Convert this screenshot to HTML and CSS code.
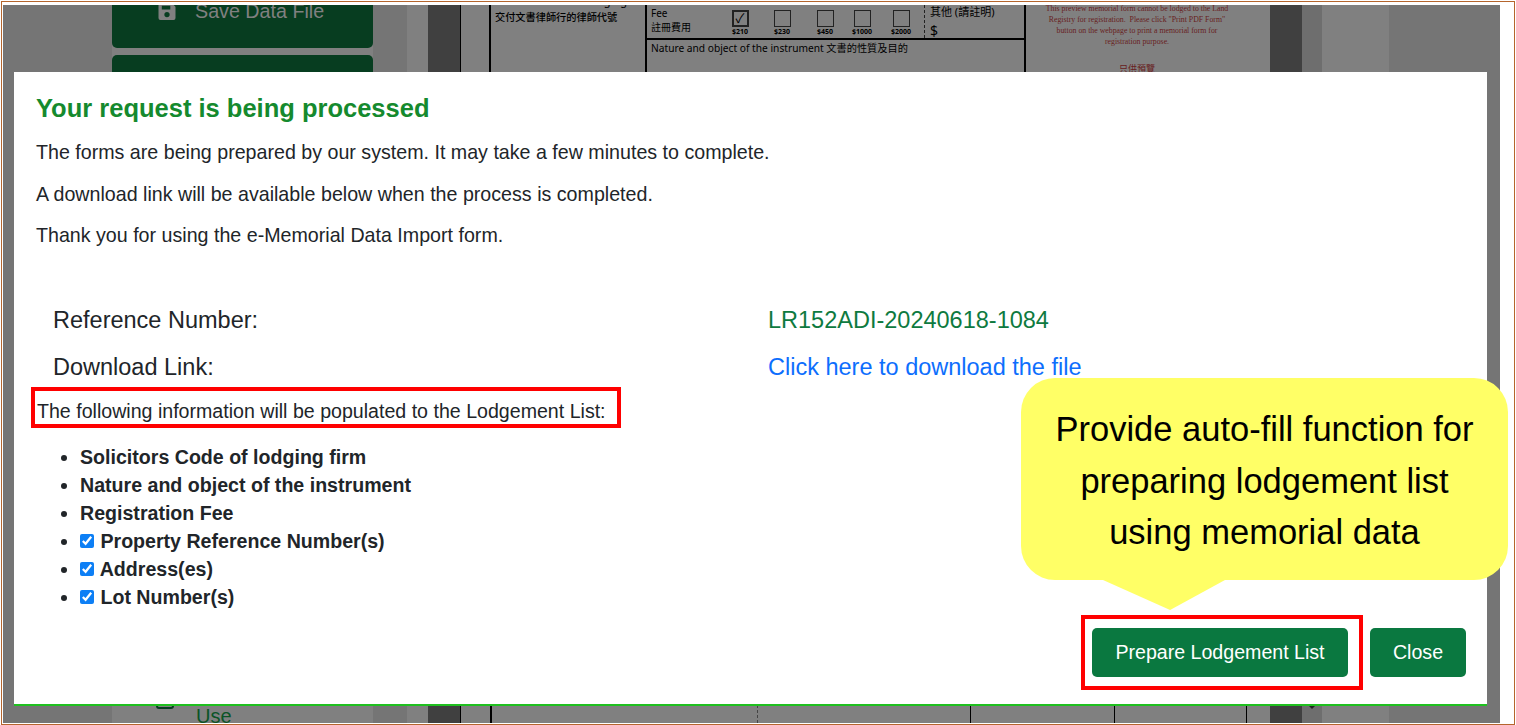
FILE: index.html
```html
<!DOCTYPE html>
<html lang="en">
<head>
<meta charset="utf-8">
<title>e-Memorial Data Import</title>
<link rel="stylesheet" href="styles.css">
</head>
<body>
<div class="frame">
  <div class="page">
    <div class="col col-rail"></div>
    <aside class="col col-side">
      <div class="side-btn side-btn-first">
        <svg class="disk" viewBox="0 0 18 18" aria-hidden="true"><path fill-rule="evenodd" d="M2 0H14L18 4V16A2 2 0 0 1 16 18H2A2 2 0 0 1 0 16V2A2 2 0 0 1 2 0ZM3.5 3V7H12.5V3ZM9 9.5A2.8 2.8 0 1 0 9 15.1A2.8 2.8 0 1 0 9 9.5Z"/></svg>
        <span>Save Data File</span>
      </div>
      <div class="side-btn side-btn-second"></div>
      <div class="use-item">
        <span class="use-box"></span>
        <span class="use-label">Use</span>
      </div>
    </aside>
    <div class="col col-track"></div>
    <div class="col col-gap"></div>
    <div class="col col-dark col-dark-edge"></div>
    <main class="col col-sheet">
      <div class="sheet-top">
        <div class="cell-firm">
          <p class="firm-en">Solicitors Code of lodging firm</p>
          <p class="firm-zh">交付文書律師行的律師代號</p>
        </div>
        <div class="cell-form">
          <div class="fee-row">
            <div class="fee-title">Fee<br>註冊費用</div>
            <div class="fee-opt"><span class="fee-box fee-box-on">✓</span><span class="fee-amt">$210</span></div>
            <div class="fee-opt"><span class="fee-box"></span><span class="fee-amt">$230</span></div>
            <div class="fee-opt"><span class="fee-box"></span><span class="fee-amt">$450</span></div>
            <div class="fee-opt"><span class="fee-box"></span><span class="fee-amt">$1000</span></div>
            <div class="fee-opt"><span class="fee-box"></span><span class="fee-amt">$2000</span></div>
            <div class="fee-other"><span>其他 (請註明)</span><span class="fee-dollar">$</span></div>
          </div>
          <p class="nature">Nature and object of the instrument 文書的性質及目的</p>
        </div>
        <div class="notice">
          <p>This preview memorial form cannot be lodged to the Land<br>Registry for registration.&nbsp; Please click "Print PDF Form"<br>button on the webpage to print a memorial form for<br>registration purpose.</p>
          <p class="notice-zh">只供預覽</p>
        </div>
      </div>
      <div class="sheet-bottom">
        <span class="rule rule-thick"></span>
        <span class="rule rule-dashed"></span>
        <span class="rule"></span>
        <span class="rule"></span>
        <span class="rule"></span>
      </div>
    </main>
    <div class="col col-dark"></div>
    <div class="col col-spin"><span class="caret"></span></div>
    <div class="col col-gap"></div>
    <div class="col col-rail"></div>
  </div>

  <section class="modal">
    <h1 class="modal-title">Your request is being processed</h1>
    <p class="msg">The forms are being prepared by our system. It may take a few minutes to complete.</p>
    <p class="msg">A download link will be available below when the process is completed.</p>
    <p class="msg">Thank you for using the e-Memorial Data Import form.</p>

    <dl class="details">
      <div class="detail-row">
        <dt>Reference Number:</dt>
        <dd class="ref-value">LR152ADI-20240618-1084</dd>
      </div>
      <div class="detail-row">
        <dt>Download Link:</dt>
        <dd><a class="dl-link" href="#">Click here to download the file</a></dd>
      </div>
    </dl>

    <p class="populate">The following information will be populated to the Lodgement List:</p>

    <ul class="fields">
      <li>Solicitors Code of lodging firm</li>
      <li>Nature and object of the instrument</li>
      <li>Registration Fee</li>
      <li><label class="field-check"><input type="checkbox" checked> Property Reference Number(s)</label></li>
      <li><label class="field-check"><input type="checkbox" checked> Address(es)</label></li>
      <li><label class="field-check"><input type="checkbox" checked> Lot Number(s)</label></li>
    </ul>

    <footer class="actions">
      <div class="highlight"><button class="btn btn-prepare" type="button">Prepare Lodgement List</button></div>
      <button class="btn btn-close" type="button">Close</button>
    </footer>
  </section>

  <div class="callout">Provide auto-fill function for<br>preparing lodgement list<br>using memorial data</div>
</div>
</body>
</html>
```

FILE: styles.css
```css
* { box-sizing: border-box; }

html, body {
  margin: 0;
  height: 100%;
  overflow: hidden;
  background: #fff;
}

body {
  padding: 1px 0 0 1px;
  font-family: "Liberation Sans", Arial, sans-serif;
}

p, h1, dl, dd, ul { margin: 0; padding: 0; }

.frame {
  position: relative;
  width: 1514px;
  height: 724px;
  padding: 3px 14px 1px 1px;
  border: 1px solid #b5652d;
}

/* dimmed page behind the dialog */
.page {
  display: grid;
  grid-template-columns: 109px 261px 34px 21px 33px 809px 32px 20px 67px 111px;
  width: 1497px;
  height: 718px;
  overflow: hidden;
  background: #808080;
}

.col { height: 718px; overflow: hidden; }
.col-rail { background: #757575; }
.col-side { display: flex; flex-direction: column; background: #808080; }
.col-track { background: #757575; }
.col-gap { background: #808080; }
.col-dark { background: #404040; }
.col-dark-edge { border-right: 1px solid #000; }
.col-spin { display: flex; align-items: flex-end; justify-content: center; background: #6e6e6e; padding-bottom: 14px; }

.caret {
  width: 0;
  height: 0;
  border-left: 4px solid transparent;
  border-right: 4px solid transparent;
  border-top: 4px solid #222;
}

.side-btn {
  display: flex;
  align-items: center;
  gap: 19px;
  padding-left: 46px;
  background: #073d20;
  border-radius: 5px;
  color: #808080;
  font-size: 19.7px;
}
.side-btn-first { height: 43px; padding-bottom: 31px; border-radius: 0 0 5px 5px; }
.side-btn-second { height: 60px; margin-top: 7px; }
.disk { width: 18px; height: 17px; fill: #808080; flex: none; }

.use-item {
  display: flex;
  gap: 22px;
  height: 32px;
  margin-top: auto;
  padding-left: 44px;
  color: #0c5426;
}
.use-box {
  width: 18px;
  height: 18px;
  border: 2px solid #073d20;
  border-radius: 3px;
}
.use-label { margin-top: 12px; font-size: 20px; line-height: 26px; }

/* form sheet */
.col-sheet { display: flex; flex-direction: column; justify-content: space-between; background: #808080; padding-left: 28px; }

.sheet-top {
  display: grid;
  grid-template-columns: 156px 381px 224px;
  height: 67px;
  color: #000;
  font-family: "Noto Sans", "Noto Sans CJK TC", sans-serif;
}

.cell-firm { border-left: 2px solid #000; padding-left: 4px; overflow: hidden; }
.firm-en { margin-top: -12px; font-size: 11px; line-height: 15px; white-space: nowrap; }
.firm-zh { font-size: 10.2px; line-height: 18px; font-weight: 500; white-space: nowrap; }

.cell-form { border-left: 2px solid #000; border-right: 2px solid #000; }

.fee-row {
  display: grid;
  grid-template-columns: 73px 40px 44px 42px 32px 46px 1fr;
  height: 35px;
  border-bottom: 2px solid #000;
}
.fee-title { padding: 1px 0 0 4px; font-size: 10px; line-height: 14px; }
.fee-opt { display: flex; flex-direction: column; align-items: center; padding-top: 5px; }
.fee-box {
  display: block;
  width: 17px;
  height: 17px;
  border: 1px solid #222;
  font-size: 13px;
  line-height: 15px;
  text-align: center;
}
.fee-box-on { border-width: 2px; line-height: 13px; }
.fee-amt { margin-top: 1px; font-size: 7px; line-height: 8px; font-weight: 700; }
.fee-other {
  display: flex;
  flex-direction: column;
  padding: 0 0 0 5px;
  border-left: 1px dashed #222;
  font-size: 11px;
  line-height: 13px;
}
.fee-dollar { margin-top: 6px; font-size: 14px; line-height: 14px; }
.nature { padding: 0 0 0 4px; font-size: 10.2px; line-height: 17px; white-space: nowrap; }

.notice {
  margin-top: -2px;
  padding: 0 18px 0 16px;
  color: #682020;
  font-family: "Liberation Serif", serif;
  font-size: 7.8px;
  line-height: 11px;
  text-align: center;
  white-space: nowrap;
}
.notice-zh { margin-top: 16px; font-family: "Noto Sans CJK TC", sans-serif; font-size: 9px; }

.sheet-bottom {
  display: grid;
  grid-template-columns: 267px 213px 144px 132px 1fr;
  height: 18px;
  padding-left: 1px;
}
.rule { border-left: 1px solid #000; }
.rule-thick { border-left-width: 2px; }
.rule-dashed { border-left: 1px dashed #444; }

/* dialog */
.modal {
  position: absolute;
  left: 12px;
  top: 70px;
  display: flex;
  flex-direction: column;
  width: 1473px;
  height: 634px;
  padding: 21px 21px 14px 22px;
  background: #fff;
  border-bottom: 2px solid #1fc01f;
  color: #212529;
}

.modal-title {
  height: 30px;
  margin-bottom: 17px;
  color: #158a2e;
  font-size: 25.5px;
  line-height: 30px;
  font-weight: 700;
}

.msg { height: 24px; margin-bottom: 17.5px; font-size: 19.65px; line-height: 24px; }

.details { margin: 40px 0 0 17px; }
.detail-row { display: grid; grid-template-columns: 715px 1fr; height: 47px; font-size: 23.5px; line-height: 30px; }
.ref-value { color: #0e7a40; }
.dl-link { color: #0d6efd; text-decoration: none; }

.populate {
  width: 590px;
  height: 41px;
  margin: -12px 0 0 -5px;
  padding: 4px 0 0 2px;
  border: 4px solid #f00;
  font-size: 19.6px;
  line-height: 33px;
}

.fields { margin: 15px 0 0 44px; font-size: 19.6px; line-height: 28px; font-weight: 700; }
.field-check input { width: 14px; height: 14px; margin: 0 1px 0 0; accent-color: #0d7ff5; }

.actions { display: flex; align-items: center; justify-content: flex-end; gap: 7px; margin-top: auto; }
.highlight { padding: 9px 11px 9px 7px; border: 4px solid #f00; }

.btn {
  height: 49px;
  border: 0;
  border-radius: 5px;
  background: #0a7840;
  color: #fff;
  font-family: inherit;
  font-size: 19.6px;
}
.btn-prepare { display: block; width: 256px; }
.btn-close { width: 96px; }

.callout {
  position: absolute;
  left: 1019px;
  top: 376px;
  display: flex;
  align-items: center;
  justify-content: center;
  width: 487px;
  height: 202px;
  padding-top: 5px;
  background: #ff6;
  border-radius: 34px;
  color: #000;
  font-size: 34.5px;
  line-height: 51.5px;
  text-align: center;
}
.callout::after {
  content: "";
  position: absolute;
  left: 82px;
  top: 100%;
  width: 122px;
  height: 30px;
  background: #ff6;
  clip-path: polygon(0 0, 100% 0, 55% 100%);
}
```
